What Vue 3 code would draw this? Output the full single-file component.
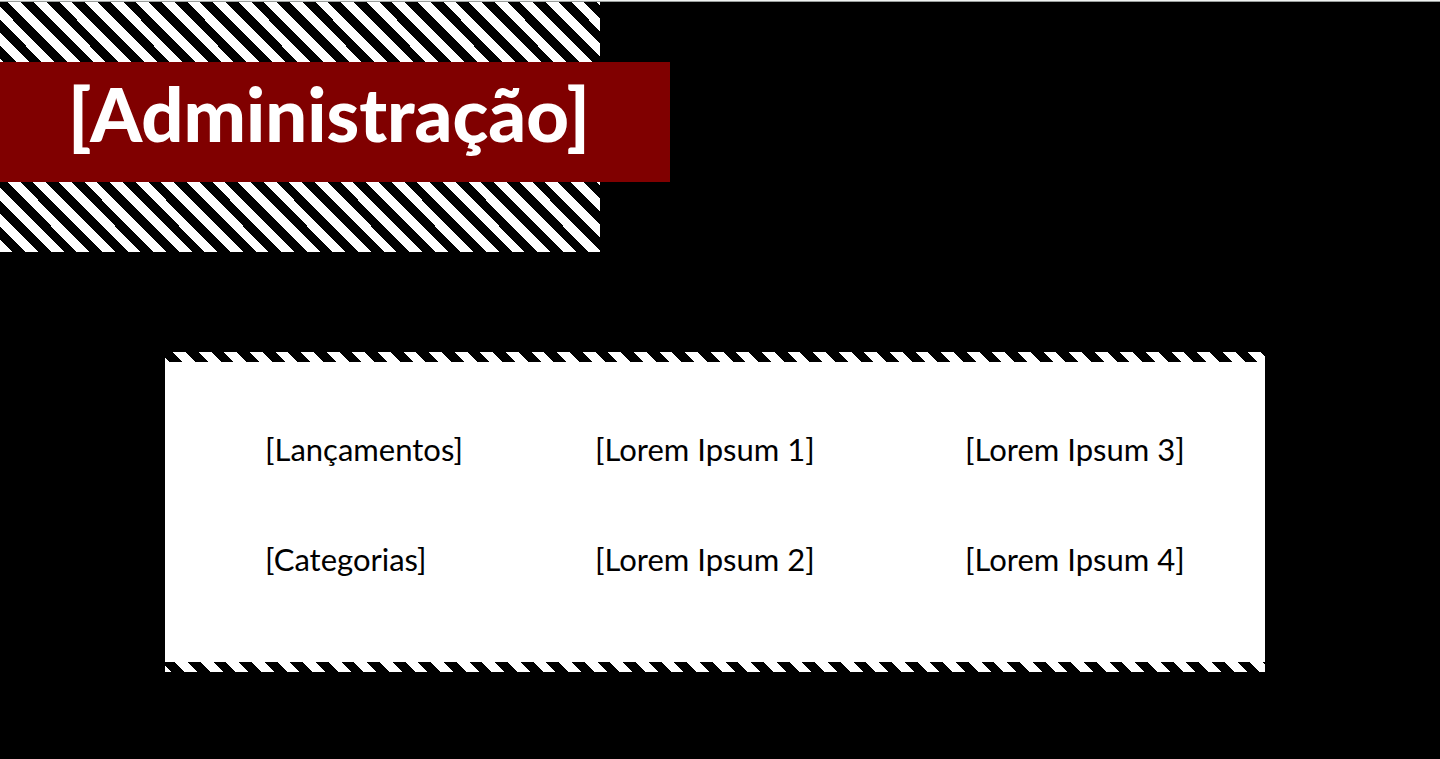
<script setup>
const items = [
  'Lançamentos',
  'Lorem Ipsum 1',
  'Lorem Ipsum 3',
  'Categorias',
  'Lorem Ipsum 2',
  'Lorem Ipsum 4',
]
</script>

<template>
  <div class="page">
    <header class="hero stripes">
      <h1 class="title">[Administração]</h1>
    </header>
    <main class="content">
      <nav class="panel" aria-label="Administração">
        <div class="edge edge-top stripes"></div>
        <ul class="menu">
          <li v-for="item in items" :key="item">
            <a href="#">[{{ item }}]</a>
          </li>
        </ul>
        <div class="edge edge-bottom stripes"></div>
      </nav>
    </main>
  </div>
</template>

<style>
body {
  background: #000;
}
</style>

<style scoped>
.page {
  box-sizing: border-box;
  min-height: 100vh;
  padding-top: 1px;
  border-top: 1px solid #f0f2f1;
  box-shadow: inset 0 1px #9a9e9c;
  background: #000;
  font-family: 'Trebuchet MS', Lato, sans-serif;
}

.stripes {
  background-image: repeating-linear-gradient(to top right, #fff 0 5%, #000 5% 10%);
  background-size: 128px 129px;
  background-position: left bottom;
}

.hero {
  width: 600px;
  padding: 60px 0 70px;
}

.title {
  box-sizing: border-box;
  width: 670px;
  margin: 0;
  padding: 0 0 16px 68px;
  background: #800000;
  color: #fff;
  font-size: 74px;
  font-weight: 900;
  line-height: 104px;
}

.content {
  padding: 100px 10px 80px 0;
}

.panel {
  max-width: 1100px;
  margin: 0 auto;
}

.edge {
  height: 10px;
}

.edge-top {
  background-position: -8px bottom;
}

.edge-bottom {
  background-position: -6px bottom;
}

.menu {
  display: grid;
  grid-template-columns: 330px 370px 1fr;
  row-gap: 70px;
  margin: 0;
  padding: 67px 0 83px 100px;
  background: #fff;
  list-style: none;
  font-size: 31px;
  line-height: 40px;
}

.menu a {
  color: #000;
  text-decoration: none;
}
</style>
